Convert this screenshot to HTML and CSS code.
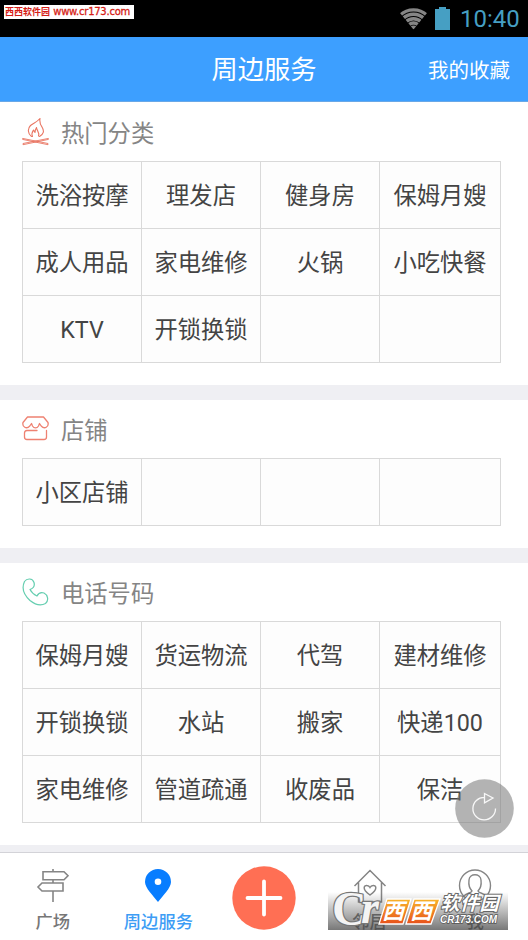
FILE: index.html
```html
<!DOCTYPE html>
<html lang="zh-CN">
<head>
<meta charset="utf-8">
<title>周边服务</title>
<link rel="stylesheet" href="styles.css">
</head>
<body>
<div class="app">
  <div class="status">
    <div class="site-tag"><span class="site-cn">西西软件园</span><span class="site-url">www.cr173.com</span></div>
    <div class="status-right">
      <svg class="wifi" width="29" height="23" viewBox="0 0 29 23"><defs><clipPath id="fan"><path d="M14.5 22.5L-1 3.5V-2H30V3.5Z"/></clipPath></defs><g clip-path="url(#fan)" fill="none" stroke="#858585" stroke-width="3.4"><circle cx="14.5" cy="22.5" r="19.6"/><circle cx="14.5" cy="22.5" r="15.2"/><circle cx="14.5" cy="22.5" r="10.8"/><circle cx="14.5" cy="22.5" r="6.5"/><circle cx="14.5" cy="22.5" r="2.2"/></g></svg>
      <svg class="battery" width="15" height="23" viewBox="0 0 15 23"><path fill="#469fc3" d="M4 0h7v2h4v21H0V2h4z"/></svg>
      <span class="clock">10:40</span>
    </div>
  </div>
  <header class="header"><h1>周边服务</h1><a class="fav">我的收藏</a></header>
  <main class="content">
    <section class="section first">
      <div class="heading">
        <svg width="27" height="28" viewBox="0 0 27 28" fill="none" stroke="#e97562" stroke-width="1.1" stroke-linecap="round" stroke-linejoin="round"><path d="M9.500 18.500C5.500 15.500 5.500 10.500 8.500 7.500c3-2.500 6-3 9.500-7-.8 4.500.3 6 2 8.500 2.500 4 1.700 7-2.500 9.500"/><path d="M10.500 18.500c-1.500-3-.3-4.500 1-6.500l1.500 2.500c.2-2 .5-3.500 1.500-5 0 3 3.500 5 2 8.500"/><path d="M1 20.500L26 25.500v1.200L1 21.500zM26 20.500L1 25.500v1.200L26 21.500z" stroke-width=".9"/></svg>
        <h2>热门分类</h2>
      </div>
      <div class="grid">
        <div>洗浴按摩</div><div>理发店</div><div>健身房</div><div>保姆月嫂</div>
        <div>成人用品</div><div>家电维修</div><div>火锅</div><div>小吃快餐</div>
        <div>KTV</div><div>开锁换锁</div><div></div><div></div>
      </div>
    </section>
    <section class="section second">
      <div class="heading">
        <svg width="27" height="28" viewBox="0 0 27 28" fill="none" stroke="#ee8171" stroke-width="1.3" stroke-linecap="round" stroke-linejoin="round"><path d="M5.500 2h16L26 7.500c1 4.500-3.500 7-6.800 3.500L17.500 8.500l-1 2.500c-1.500 2.500-4.500 2.500-6 0l-1-2.500L7.800 11C4.500 14.500 0 12 1 7.500zM13.500 12.500"/><path d="M15 15.500H5q-2.500 0-2.500 2.500v4q0 2.500 2.500 2.500h17q2.500 0 2.500-2.500v-6.500"/></svg>
        <h2>店铺</h2>
      </div>
      <div class="grid"><div>小区店铺</div><div></div><div></div><div></div></div>
    </section>
    <section class="section third">
      <div class="heading">
        <svg width="27" height="28" viewBox="0 0 27 28" fill="none" stroke="#65ceb0" stroke-width="1.2" stroke-linejoin="round"><path d="M12 4.500C10.500 0 5 0 2.500 3.500-.5 10 2 17 8 22.500c5 4 11 5.500 15.500 3 3.500-3 2.500-8.500-1.500-10.500-3.500-1-5.500 0-7 3-3-1.500-5.500-3.500-7-6.500C12 10 13 8 12 4.500z"/></svg>
        <h2>电话号码</h2>
      </div>
      <div class="grid">
        <div>保姆月嫂</div><div>货运物流</div><div>代驾</div><div>建材维修</div>
        <div>开锁换锁</div><div>水站</div><div>搬家</div><div>快递100</div>
        <div>家电维修</div><div>管道疏通</div><div>收废品</div><div>保洁</div>
      </div>
    </section>
  </main>
  <nav class="tabs">
    <a class="tab"><svg width="34" height="34" viewBox="0 0 34 34" fill="none" stroke="#858585" stroke-width="1.6"><path d="M17 0v2.500M17 11v3M17 22v11M7 2.800h21l4 4-4 4H7zM27 14H6l-4 4 4 4h21z"/></svg><span>广场</span></a>
    <a class="tab active"><svg width="34" height="34" viewBox="0 0 34 34"><path fill="#087dff" fill-rule="evenodd" d="M17 33C12.500 27 4 19 4 13a13 13 0 0 1 26 0c0 6-8.500 14-13 20zM17 9.500a3.300 3.300 0 1 0 0 6.600 3.300 3.300 0 0 0 0-6.600z"/></svg><span>周边服务</span></a>
    <a class="add"><svg width="64" height="64" viewBox="0 0 64 64"><circle cx="32" cy="32" r="31.700" fill="#ff6f54"/><path d="M32 15.500v33M15.500 32h33" stroke="#fff" stroke-width="3.800" stroke-linecap="round"/></svg></a>
    <a class="tab"><svg width="34" height="34" viewBox="0 0 34 34" fill="none" stroke="#858585" stroke-width="1.5"><path d="M1.500 17L17 1.500 32.500 17M5.500 13v20h23V13M17 26c-9-6-5.500-10-3-9.500 2 .2 3 2 3 2s1-1.800 3-2c2.500-.5 6 3.500-3 9.500z"/></svg><span>邻居</span></a>
    <a class="tab"><svg width="34" height="34" viewBox="0 0 34 34" fill="none" stroke="#858585" stroke-width="1.400"><circle cx="17" cy="16.500" r="15.500"/><path d="M6 27c2-3 7-2.500 8-5-3-3-3.500-7-3-11 .5-7 11.500-7 12 0 .5 4 0 8-3 11 1 2.500 6 2 8 5"/></svg><span>我</span></a>
  </nav>
  <svg class="refresh" width="59" height="59" viewBox="0 0 59 59"><circle cx="29.500" cy="29.500" r="29.300" fill="#777" fill-opacity=".55"/><path d="M29.500 18.300A11.300 11.300 0 1 0 40.500 29.500M29.500 14.500l8.500 4.500-8.500 4.800z" fill="none" stroke="#fff" stroke-opacity=".9" stroke-width="1.300"/></svg>
  <svg class="watermark" width="180" height="48" viewBox="0 0 180 48">
    <defs>
      <linearGradient id="shade" x2="0" y2="1"><stop stop-color="#444" stop-opacity="0"/><stop offset="1" stop-color="#444" stop-opacity=".72"/></linearGradient>
      <linearGradient id="gold" x2="0" y2="1"><stop stop-color="#f9b52a"/><stop offset="1" stop-color="#e7501b"/></linearGradient>
    </defs>
    <path fill="url(#shade)" d="M0 10h180v38H0z"/>
    <text x="4" y="43" class="wm-c">C</text><text x="33" y="41" class="wm-r">r</text>
    <g stroke="#fff" stroke-width="1.300" fill="url(#gold)"><path d="M59 17h24l-8 25H51zM86 17h26l-9 25H78z"/></g>
    <g transform="skewX(-15)" class="wm-cn">
      <text x="64" y="37" class="wm-xi" textLength="23">西</text><text x="92" y="37" class="wm-xi" textLength="23">西</text>
      <text x="120" y="28" class="wm-soft" textLength="58">软件园</text>
    </g>
    <text x="112" y="41" class="wm-url" textLength="57" lengthAdjust="spacingAndGlyphs">CR173.COM</text>
  </svg>
</div>
</body>
</html>
```

FILE: styles.css
```css
* { box-sizing: border-box; }
body { margin: 0; font-family: Roboto, "Noto Sans CJK SC", sans-serif; background: #fff; color: #444; }
.app { position: relative; width: 528px; height: 940px; overflow: hidden; display: flex; flex-direction: column; }
.status { height: 37px; flex: none; background: #000; display: flex; justify-content: space-between; padding: 0 9px 0 4px; }
.site-tag { margin-top: 5px; width: 130px; height: 14px; background: #fff; color: #d51d16; display: flex; align-items: center; justify-content: space-between; padding: 0 4px 0 1px; white-space: nowrap; line-height: 14px; }
.site-cn { font-size: 9px; font-weight: 700; }
.site-url { font-family: "DejaVu Sans", sans-serif; font-size: 10px; letter-spacing: -.25px; -webkit-text-stroke: .3px #d51d16; }
.status-right { display: flex; align-items: center; }
.battery { margin-left: 7px; }
.status-right svg { margin-top: -1px; }
.clock { margin-left: 10px; width: 59px; padding-top: 2px; font-size: 24px; line-height: 37px; color: #469fc3; white-space: nowrap; }
.header { height: 65px; flex: none; background: #3d9fff; border-bottom: 1px solid #69a8e7; color: #fff; display: grid; grid-template-columns: 1fr auto 1fr; align-items: center; padding: 0 18px; }
.header h1 { grid-column: 2; margin: 0; padding-top: 2px; font-size: 26.300px; font-weight: 400; line-height: 62px; }
.fav { justify-self: end; font-size: 20.500px; }
.content { height: 751px; flex: none; background: #efeff3; border-bottom: 1px solid #d3d3d8; display: flex; flex-direction: column; gap: 15px; }
.section { flex: none; background: #fff; padding: 0 27px 0 22px; }
.first { height: 283px; }
.second { height: 148px; }
.third { height: 282px; }
.heading { height: 58px; display: flex; align-items: center; gap: 12px; }
.first .heading { height: 59px; padding-top: 1px; }
.heading h2 { margin: 0; padding-top: 3px; font-size: 23.300px; line-height: 34px; font-weight: 400; color: #858585; }
.grid { display: grid; grid-template-columns: 119px 119px 119px 121px; grid-auto-rows: 67px; border-left: 1px solid #d9d9d9; border-top: 1px solid #d9d9d9; background: #fdfdfd; }
.grid div { border-right: 1px solid #d9d9d9; border-bottom: 1px solid #d9d9d9; padding-top: 2px; display: flex; align-items: center; justify-content: center; font-size: 23.300px; line-height: 34px; white-space: nowrap; }
.tabs { height: 87px; flex: none; background: #fff; display: grid; grid-template-columns: repeat(5, 1fr); }
.tab { display: flex; flex-direction: column; align-items: center; padding-top: 16px; color: #777; font-size: 17.300px; font-weight: 500; line-height: 24px; }
.tab span { margin-top: 7px; }
.active { color: #3d9df5; }
.add { display: flex; justify-content: center; padding-top: 13px; }
.refresh { position: absolute; left: 455px; top: 779px; }
.watermark { position: absolute; left: 328px; top: 882px; overflow: visible; }
.wm-c, .wm-r { font-family: "Liberation Serif", serif; fill: #f4f4f4; stroke: #777; stroke-width: 2.5px; paint-order: stroke; }
.wm-c { font-size: 48px; font-weight: 700; }
.wm-r { font-size: 46px; font-weight: 700; font-style: italic; }
.wm-cn { font-family: "Noto Sans CJK SC", sans-serif; font-weight: 700; fill: #fff; }
.wm-xi { font-size: 22px; }
.wm-soft { font-size: 19px; stroke: #666; stroke-width: 2px; paint-order: stroke; }
.wm-url { font-family: "Liberation Sans", sans-serif; font-size: 10.5px; font-weight: 700; font-style: italic; fill: #fff; stroke: #555; stroke-width: 1.5px; paint-order: stroke; }
```
